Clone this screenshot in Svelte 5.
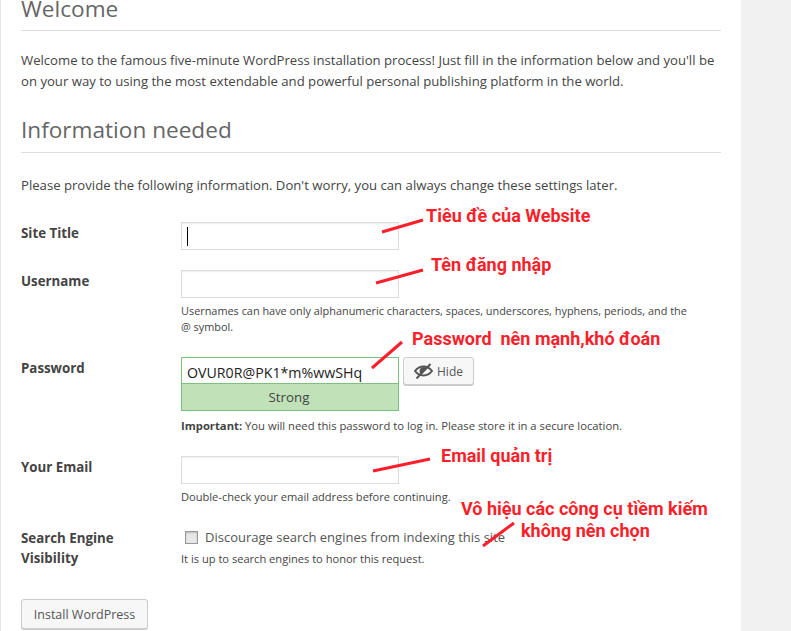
<script>
	const notes = [
		{text: 'Tiêu đề của Website', x: 426, y: 206},
		{text: 'Tên đăng nhập', x: 431, y: 255},
		{text: 'Password  nên mạnh,khó đoán', x: 412, y: 329},
		{text: 'Email quản trị', x: 441, y: 446},
		{text: 'Vô hiệu các công cụ tìềm kiếm', x: 461, y: 499},
		{text: 'không nên chọn', x: 521, y: 521}
	];

	const lines = [
		[382, 232, 423, 220],
		[376, 283, 423, 270],
		[372, 368, 402, 342],
		[373, 471, 430, 459],
		[483, 546, 514, 523]
	];
</script>

<main class="card">
	<h1>Welcome</h1>
	<p class="intro">Welcome to the famous five-minute WordPress installation process! Just fill in the information below and you'll be on your way to using the most extendable and powerful personal publishing platform in the world.</p>

	<h2>Information needed</h2>
	<p class="please">Please provide the following information. Don't worry, you can always change these settings later.</p>

	<div class="row first">
		<span class="label">Site Title</span>
		<div class="field"><div class="input"><i class="caret"></i></div></div>
	</div>

	<div class="row username">
		<span class="label">Username</span>
		<div class="field">
			<div class="input"></div>
			<p class="desc two">Usernames can have only alphanumeric characters, spaces, underscores, hyphens, periods, and the @ symbol.</p>
		</div>
	</div>

	<div class="row password">
		<span class="label">Password</span>
		<div class="field">
			<div class="pass-line">
				<div class="pass-box">
					<div class="pass-value">OVUR0R@PK1*m%wwSHq</div>
					<div class="strength">Strong</div>
				</div>
				<button class="btn hide" type="button">
					<svg width="19" height="16" viewBox="0 0 19 16" fill="none">
						<path d="M1 8C3.300 5 6 3.500 9.500 3.500S15.700 5 18 8c-2.300 3-5 4.500-8.500 4.500S3.300 11 1 8z" stroke="#555" stroke-width="2"/>
						<path d="M5.500 8a4 4 0 0 1 7-2.600L7 11.300A4 4 0 0 1 5.500 8z" fill="#555"/>
						<path d="M2.500 15.500L16.500 1" stroke="#555" stroke-width="2"/>
					</svg>
					<span>Hide</span>
				</button>
			</div>
			<p class="desc imp"><strong>Important:</strong> You will need this password to log in. Please store it in a secure location.</p>
		</div>
	</div>

	<div class="row email">
		<span class="label">Your Email</span>
		<div class="field">
			<div class="input"></div>
			<p class="desc mail">Double-check your email address before continuing.</p>
		</div>
	</div>

	<div class="row search">
		<span class="label wrap">Search Engine Visibility</span>
		<div class="field">
			<div class="check-line"><i class="check"></i><span>Discourage search engines from indexing this site</span></div>
			<p class="desc honor">It is up to search engines to honor this request.</p>
		</div>
	</div>

	<button class="btn install" type="button">Install WordPress</button>
</main>

<svg class="marks" width="791" height="631">
	{#each lines as l}
		<line x1={l[0]} y1={l[1]} x2={l[2]} y2={l[3]} stroke="#fb1f2b" stroke-width="3"/>
	{/each}
</svg>
{#each notes as n}
	<span class="note" style="left: {n.x}px; top: {n.y}px;">{n.text}</span>
{/each}

<style>
	:global(body) {
		background: #f1f1f1;
		font-family: "Open Sans", sans-serif;
		color: #444;
		overflow: hidden;
	}

	.card {
		box-sizing: border-box;
		width: 741px;
		height: 631px;
		padding: 0 20px;
		background: #fff;
		overflow: hidden;
		border-left: 1px solid #e4e4e4;
	}

	h1, h2 {
		margin: 0;
		font-size: 22.6px;
		font-weight: 400;
		color: #666;
		border-bottom: 1px solid #dedede;
	}

	h1 {
		height: 32px;
		line-height: 20px;
		margin-top: -1px;
		box-sizing: border-box;
	}

	h2 {
		height: 43px;
		line-height: 40px;
		margin-top: 18px;
		box-sizing: border-box;
	}

	.intro {
		margin: 19px 0 0;
		font-size: 13.15px;
		line-height: 21px;
	}

	.please {
		margin: 22px 0 0;
		font-size: 13.15px;
		line-height: 20px;
	}

	.row {
		display: grid;
		grid-template-columns: 160px 1fr;
		font-size: 13.3px;
	}

	.first { margin-top: 27px; }
	.username { margin-top: 20px; }
	.password { margin-top: 22px; }
	.email { margin-top: 22px; }
	.search { margin-top: 22px; }

	.label {
		font-weight: 700;
		line-height: 20px;
		padding-top: 1px;
	}

	.wrap {
		width: 110px;
	}

	.input {
		box-sizing: border-box;
		width: 218px;
		height: 28px;
		border: 1px solid #ddd;
		box-shadow: inset 0 1px 2px rgba(0, 0, 0, .07);
		padding: 4px 5px;
	}

	.caret {
		display: block;
		width: 1px;
		height: 19px;
		background: #000;
	}

	.desc {
		margin: 6px 0 0;
		font-size: 11.1px;
		line-height: 16px;
		color: #444;
		width: 520px;
	}

	.two {
		font-size: 10.9px;
		margin-top: 5px;
		width: 510px;
	}

	.imp {
		margin-top: 7px;
		font-size: 11.25px;
	}

	.mail { margin-top: 5px; }

	.pass-line {
		display: flex;
		gap: 4px;
		align-items: flex-start;
	}

	.pass-box {
		box-sizing: border-box;
		width: 218px;
		height: 54px;
		border: 1px solid #7ec17e;
	}

	.pass-value {
		height: 26px;
		line-height: 29px;
		padding-left: 5px;
		font-size: 14.2px;
		color: #222;
		border-bottom: 1px solid #7ec17e;
		box-sizing: border-box;
	}

	.strength {
		height: 26px;
		line-height: 27px;
		padding-right: 2px;
		text-align: center;
		font-size: 13.3px;
		background: #c1e1b9;
		color: #444;
	}

	.btn {
		box-sizing: border-box;
		font-family: inherit;
		font-size: 12px;
		color: #555;
		background: #f7f7f7;
		border: 1px solid #ccc;
		border-radius: 3px;
		box-shadow: 0 1px 0 #ccc;
	}

	.hide {
		display: flex;
		align-items: center;
		gap: 4px;
		width: 71px;
		height: 28px;
		padding: 0 0 0 10px;
	}

	.check-line {
		display: flex;
		align-items: center;
		gap: 7px;
		height: 20px;
		padding-left: 4px;
		font-size: 13px;
		color: #555;
	}

	.check {
		box-sizing: border-box;
		width: 13px;
		height: 13px;
		border: 1px solid #999;
		background: #e8e8e8;
		box-shadow: inset 0 1px 2px rgba(0, 0, 0, .2);
	}

	.honor { margin-top: 4px; }

	.install {
		display: block;
		width: 127px;
		height: 30px;
		margin-top: 31px;
		font-size: 12.5px;
		padding: 0;
	}

	.marks {
		position: absolute;
		left: 0;
		top: 0;
	}

	.note {
		position: absolute;
		font-family: Roboto, sans-serif;
		font-weight: 700;
		font-size: 18px;
		line-height: 20px;
		color: #fb1f2b;
		white-space: pre;
	}
</style>
